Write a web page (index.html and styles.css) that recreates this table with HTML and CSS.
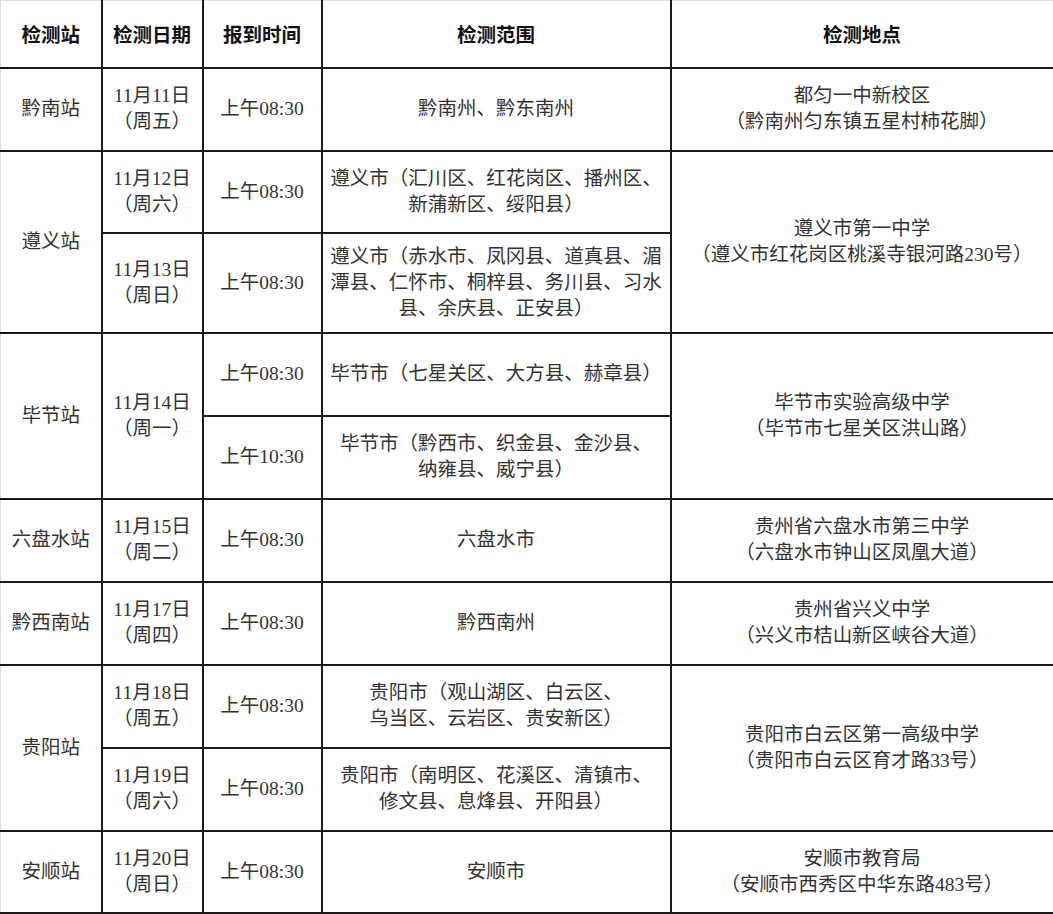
FILE: index.html
```html
<!DOCTYPE html>
<html lang="zh-CN">
<head>
<meta charset="utf-8">
<title>检测站安排</title>
<link rel="stylesheet" href="styles.css">
</head>
<body>
<table class="sched">
  <colgroup>
    <col class="c-station">
    <col class="c-date">
    <col class="c-time">
    <col class="c-range">
    <col class="c-place">
  </colgroup>
  <thead>
    <tr class="r-head">
      <th class="first">检测站</th>
      <th>检测日期</th>
      <th>报到时间</th>
      <th>检测范围</th>
      <th>检测地点</th>
    </tr>
  </thead>
  <tbody>
    <tr class="r-std">
      <td class="first">黔南站</td>
      <td>11月11日<br>（周五）</td>
      <td>上午08:30</td>
      <td>黔南州、黔东南州</td>
      <td>都匀一中新校区<br>（黔南州匀东镇五星村柿花脚）</td>
    </tr>
    <tr class="r-sm">
      <td class="first" rowspan="2">遵义站</td>
      <td>11月12日<br>（周六）</td>
      <td>上午08:30</td>
      <td class="range">遵义市（汇川区、红花岗区、播州区、<br>新蒲新区、绥阳县）</td>
      <td rowspan="2">遵义市第一中学<br>（遵义市红花岗区桃溪寺银河路230号）</td>
    </tr>
    <tr class="r-tall">
      <td>11月13日<br>（周日）</td>
      <td>上午08:30</td>
      <td class="range">遵义市（赤水市、凤冈县、道真县、湄<br>潭县、仁怀市、桐梓县、务川县、习水<br>县、余庆县、正安县）</td>
    </tr>
    <tr class="r-std">
      <td class="first" rowspan="2">毕节站</td>
      <td rowspan="2">11月14日<br>（周一）</td>
      <td>上午08:30</td>
      <td class="range">毕节市（七星关区、大方县、赫章县）</td>
      <td rowspan="2">毕节市实验高级中学<br>（毕节市七星关区洪山路）</td>
    </tr>
    <tr class="r-std">
      <td>上午10:30</td>
      <td class="range">毕节市（黔西市、织金县、金沙县、<br>纳雍县、威宁县）</td>
    </tr>
    <tr class="r-std">
      <td class="first">六盘水站</td>
      <td>11月15日<br>（周二）</td>
      <td>上午08:30</td>
      <td>六盘水市</td>
      <td>贵州省六盘水市第三中学<br>（六盘水市钟山区凤凰大道）</td>
    </tr>
    <tr class="r-std">
      <td class="first">黔西南站</td>
      <td>11月17日<br>（周四）</td>
      <td>上午08:30</td>
      <td>黔西南州</td>
      <td>贵州省兴义中学<br>（兴义市桔山新区峡谷大道）</td>
    </tr>
    <tr class="r-std">
      <td class="first" rowspan="2">贵阳站</td>
      <td>11月18日<br>（周五）</td>
      <td>上午08:30</td>
      <td>贵阳市（观山湖区、白云区、<br>乌当区、云岩区、贵安新区）</td>
      <td rowspan="2">贵阳市白云区第一高级中学<br>（贵阳市白云区育才路33号）</td>
    </tr>
    <tr class="r-std">
      <td>11月19日<br>（周六）</td>
      <td>上午08:30</td>
      <td>贵阳市（南明区、花溪区、清镇市、<br>修文县、息烽县、开阳县）</td>
    </tr>
    <tr class="r-last">
      <td class="first">安顺站</td>
      <td>11月20日<br>（周日）</td>
      <td>上午08:30</td>
      <td>安顺市</td>
      <td>安顺市教育局<br>（安顺市西秀区中华东路483号）</td>
    </tr>
  </tbody>
</table>
</body>
</html>
```

FILE: styles.css
```css
html, body {
  margin: 0;
  padding: 0;
  background: #ffffff;
}

.sched {
  width: 1053px;
  table-layout: fixed;
  border-collapse: collapse;
  font-family: "Liberation Serif", "Noto Sans CJK SC", serif;
  font-size: 19.5px;
  line-height: 26px;
  color: #333333;
}

.c-station { width: 101px; }
.c-date { width: 101px; }
.c-time { width: 119px; }
.c-range { width: 349px; }
.c-place { width: 383px; }

.sched th,
.sched td {
  border: 2px solid #1a1a1a;
  padding: 0 4px;
  text-align: center;
  vertical-align: middle;
  white-space: nowrap;
}

.sched th {
  font-family: "Noto Sans CJK SC", sans-serif;
  font-weight: 700;
  color: #111111;
  border-top: 1px solid #e2e2e2;
}

.sched .first {
  border-left: 1px solid #dddddd;
}

.r-head { height: 67px; }
.r-std { height: 83px; }
.r-sm { height: 82px; }
.r-tall { height: 100px; }
.r-last { height: 82px; }

.sched td.range {
  padding: 0 3px;
}
```
